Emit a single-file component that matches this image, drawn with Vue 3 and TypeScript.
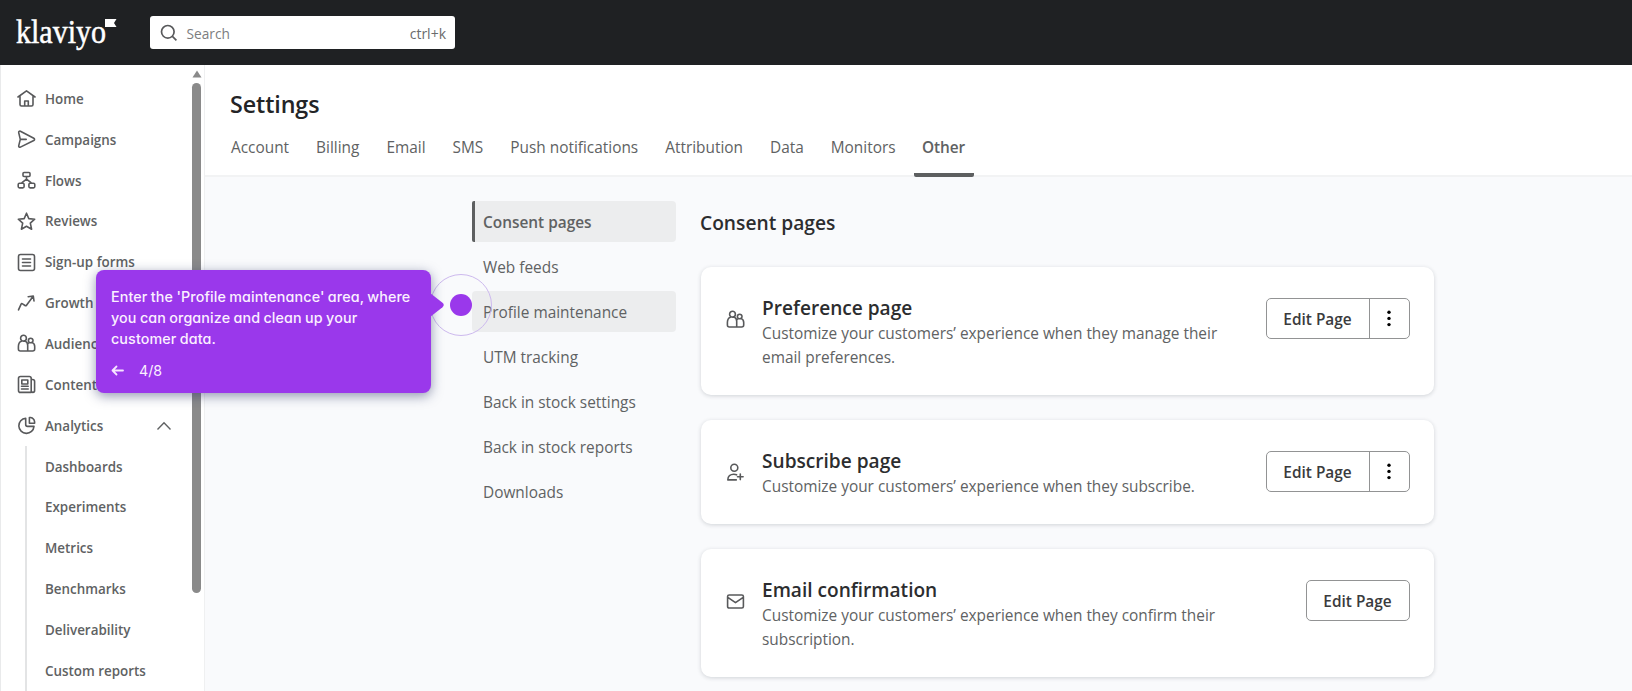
<script setup lang="ts">
interface NavItem {
  label: string
  icon: string
}

interface PageCard {
  title: string
  description: string
  icon: string
  menu: boolean
}

const icons: Record<string, string> = {
  home: 'M1 8 9.5 1.8 18 8M3 7v8.5c0 1 .6 1.5 1.5 1.5h10c1 0 1.500-.5 1.500-1.500V7M7.700 17v-5h3.600v5',
  send: 'M1.700 2.600c-.2-1 .8-1.700 1.700-1.300l13.400 7c1 .5 1 1.700 0 2.200l-13.400 6.600c-.9.4-1.900-.3-1.700-1.200L3.300 9.400zM3.300 9.400h5.900',
  flows: 'M7 1.500h5q1 0 1 1v2q0 1-1 1H7q-1 0-1-1v-2q0-1 1-1zM2.500 12.300h3.300q1.300 0 1.300 1.300v2q0 1.300-1.300 1.300H2.500q-1.300 0-1.300-1.300v-2q0-1.300 1.300-1.300zM13.200 12.300h3.300q1.300 0 1.300 1.300v2q0 1.300-1.300 1.300h-3.300q-1.300 0-1.300-1.300v-2q0-1.300 1.300-1.300zM9.500 5.500v2.600L5 11.700M9.500 8.100l4.500 3.600',
  star: 'M9.500 1.200 11.800 6.600 17.700 7.200 13.300 11.200 14.600 17.200 9.500 14.200 4.400 17.200 5.700 11.200 1.300 7.200 7.200 6.600z',
  form: 'M3.500 1.500h12q2 0 2 2v12q0 2-2 2h-12q-2 0-2-2v-12q0-2 2-2zM5.500 6h8M5.500 9.500h8M5.500 13h8',
  growth: 'M1.500 15.800 4 10.300Q4.600 9 5.600 9.800L8 11.500Q9 12.200 9.700 11L16 2.500M11.200 2.700 16.300 2 17 7',
  people: 'M6.500 1.300a2.900 2.900 0 1 1 0 5.800a2.900 2.900 0 1 1 0-5.800zM13.700 4.200a2.300 2.300 0 1 1 0 4.600a2.300 2.300 0 1 1 0-4.600zM4.400 7.200C2.200 8 1.400 9.900 1.400 12.500V15q0 2 2 2h12.200q2.100 0 2.100-2v-2.500c0-2-.8-3.200-2.300-3.900M8.600 7.200c1.400.8 2 2.200 2.100 4V17M12.200 8.600c-.8.400-1.300 1-1.600 1.800',
  content: 'M3.500 1.500h8.800q1.900 0 1.900 1.900v14H3.500q-2 0-2-2V3.500q0-2 2-2zM14.200 4.500h1.300q2.100 0 2.100 2v9q0 1.900-1.700 1.900t-1.700-1.900M4.800 5h6v4h-6zM4.500 11.300h6.700M4.500 14h6.700',
  pie: 'M8.700 2.200a7.600 7.600 0 1 0 8.300 8.200H10.500Q8.700 10.400 8.700 8.600zM12.400 1.500h1.200c2.500.5 3.700 2 4 4.300v1.400h-5.200z',
  personAdd: 'M8.300 1.300a3.500 3.500 0 1 1 0 7a3.500 3.500 0 1 1 0-7zM10.300 16.900H1.800c0-3.600 2.600-5.700 6-5.700 1.100 0 2 .2 2.800.6M14.300 11v5.600M11.500 13.800h5.600',
  mail: 'M3.200 3h12.600q1.600 0 1.600 1.600v9.800q0 1.600-1.600 1.600H3.200q-1.600 0-1.600-1.600V4.600Q1.600 3 3.200 3zM1.800 5.400 9.500 10.700 17.200 5.400',
}

const navItems: NavItem[] = [
  { label: 'Home', icon: 'home' },
  { label: 'Campaigns', icon: 'send' },
  { label: 'Flows', icon: 'flows' },
  { label: 'Reviews', icon: 'star' },
  { label: 'Sign-up forms', icon: 'form' },
  { label: 'Growth', icon: 'growth' },
  { label: 'Audience', icon: 'people' },
  { label: 'Content', icon: 'content' },
  { label: 'Analytics', icon: 'pie' },
]

const analyticsItems: string[] = [
  'Dashboards',
  'Experiments',
  'Metrics',
  'Benchmarks',
  'Deliverability',
  'Custom reports',
]

const tabs: string[] = [
  'Account',
  'Billing',
  'Email',
  'SMS',
  'Push notifications',
  'Attribution',
  'Data',
  'Monitors',
  'Other',
]

const sections: string[] = [
  'Consent pages',
  'Web feeds',
  'Profile maintenance',
  'UTM tracking',
  'Back in stock settings',
  'Back in stock reports',
  'Downloads',
]

const cards: PageCard[] = [
  {
    title: 'Preference page',
    description: 'Customize your customers’ experience when they manage their email preferences.',
    icon: 'people',
    menu: true,
  },
  {
    title: 'Subscribe page',
    description: 'Customize your customers’ experience when they subscribe.',
    icon: 'personAdd',
    menu: true,
  },
  {
    title: 'Email confirmation',
    description: 'Customize your customers’ experience when they confirm their subscription.',
    icon: 'mail',
    menu: false,
  },
]
</script>

<template>
  <div class="app">
    <header class="topbar">
      <svg class="logo" width="102" height="42" viewBox="0 0 102 42">
        <text x="0" y="27" textLength="90" lengthAdjust="spacingAndGlyphs">klaviyo</text>
        <path d="M89 3h11.500l-2.500 4 2.500 4H89z" />
      </svg>
      <div class="search">
        <svg class="search-icon" width="18" height="18" viewBox="0 0 18 18">
          <circle cx="7.800" cy="7.800" r="6.300" />
          <path d="m12.400 12.400 4 4" />
        </svg>
        <span class="placeholder">Search</span>
        <span class="shortcut">ctrl+k</span>
      </div>
    </header>

    <div class="body">
      <aside class="sidebar">
        <nav class="nav">
          <a v-for="item in navItems" :key="item.label" class="nav-item">
            <svg class="icon" width="19" height="19" viewBox="0 0 19 19"><path :d="icons[item.icon]" /></svg>
            <span>{{ item.label }}</span>
            <svg v-if="item.label === 'Analytics'" class="chevron" width="16" height="10" viewBox="0 0 16 10">
              <path d="M1.500 8.500 8 1.800l6.500 6.700" />
            </svg>
          </a>
          <div class="subnav">
            <a v-for="label in analyticsItems" :key="label" class="nav-item">{{ label }}</a>
          </div>
        </nav>
        <div class="scrollbar">
          <svg width="10" height="8" viewBox="0 0 10 8"><path d="M5 .5 9.500 7.500H.5z" /></svg>
          <div class="thumb"></div>
        </div>
      </aside>

      <main class="main">
        <div class="page-head">
          <h1>Settings</h1>
          <div class="tabs">
            <a v-for="tab in tabs" :key="tab" class="tab" :class="{ active: tab === 'Other' }">{{ tab }}</a>
          </div>
        </div>
        <div class="columns">
          <nav class="sections">
            <a
              v-for="(section, i) in sections"
              :key="section"
              class="section"
              :class="{ selected: i === 0, hovered: i === 2 }"
            >{{ section }}</a>
          </nav>
          <section class="pages">
            <h2>Consent pages</h2>
            <article v-for="card in cards" :key="card.title" class="card">
              <svg class="icon card-icon" width="19" height="19" viewBox="0 0 19 19"><path :d="icons[card.icon]" /></svg>
              <div class="card-text">
                <h3>{{ card.title }}</h3>
                <p>{{ card.description }}</p>
              </div>
              <div class="button-group">
                <button type="button" class="edit">Edit Page</button>
                <button v-if="card.menu" type="button" class="more">
                  <svg width="4" height="17" viewBox="0 0 4 17">
                    <circle cx="2" cy="2.200" r="1.700" />
                    <circle cx="2" cy="8.400" r="1.700" />
                    <circle cx="2" cy="14.600" r="1.700" />
                  </svg>
                </button>
              </div>
            </article>
          </section>
        </div>
      </main>
    </div>

    <div class="hotspot"><span class="dot"></span></div>
    <div class="tour">
      <p>Enter the 'Profile maintenance' area, where<br />you can organize and clean up your<br />customer data.</p>
      <div class="tour-foot">
        <svg width="13" height="11" viewBox="0 0 13 11"><path d="M12 5.500H1.500M5.500 1.500l-4 4 4 4" /></svg>
        <span>4/8</span>
      </div>
      <svg class="tour-arrow" width="15" height="24" viewBox="0 0 15 24"><path d="M0 0 12.500 9.800q2.500 2.200 0 4.400L0 24z" /></svg>
    </div>
  </div>
</template>

<style>
body {
  overflow: hidden;
}
</style>

<style scoped>
.app {
  position: relative;
  width: 1632px;
  height: 691px;
  overflow: hidden;
  display: flex;
  flex-direction: column;
  background: #f9fafc;
  color: #606263;
  font-family: 'Open Sans', 'Noto Sans', sans-serif;
}

.topbar {
  flex: none;
  height: 65px;
  display: flex;
  align-items: flex-start;
  background: #1f2123;
  box-sizing: border-box;
  padding: 16px 0 0 16px;
}

.logo {
  fill: #fff;
  overflow: visible;
}

.logo text {
  font-family: 'Liberation Serif', serif;
  font-size: 34px;
  stroke: #fff;
  stroke-width: 0.5px;
}

.search {
  margin-left: 31.5px;
  width: 305.5px;
  height: 33px;
  box-sizing: border-box;
  padding: 0 9px 0 10px;
  background: #fff;
  border-radius: 3px;
  display: flex;
  align-items: center;
  font-size: 13.7px;
}

.search-icon {
  fill: none;
  stroke: #58595b;
  stroke-width: 1.7;
}

.placeholder {
  flex: 1;
  margin: 2px 0 0 9px;
  color: #7c7d7e;
}

.shortcut {
  margin-top: 1px;
  font-size: 14px;
  color: #6a6b6c;
}

.body {
  flex: 1;
  min-height: 0;
  display: flex;
}

.sidebar {
  flex: none;
  width: 205px;
  box-sizing: border-box;
  border-left: 1px solid #e9eaeb;
  border-right: 1px solid #eff0f1;
  background: #fff;
  display: flex;
  overflow: hidden;
}

.nav {
  width: 190px;
  padding-top: 13.500px;
}

.nav-item {
  height: 40.85px;
  display: flex;
  align-items: center;
  padding-left: 16px;
  font-size: 13.4px;
  font-weight: 600;
  white-space: nowrap;
}

.nav-item > span {
  margin-left: 9px;
}

.icon {
  flex: none;
  fill: none;
  stroke: #58595b;
  stroke-width: 1.6;
  stroke-linejoin: round;
  stroke-linecap: round;
}

.chevron {
  margin-left: auto;
  margin-right: 19px;
  fill: none;
  stroke: #606263;
  stroke-width: 1.4;
}

.subnav {
  margin-left: 24px;
  border-left: 2px solid #e3e4e5;
}

.subnav .nav-item {
  padding-left: 18px;
}

.scrollbar {
  padding: 5px 0 0 1px;
  display: flex;
  flex-direction: column;
  gap: 5px;
}

.scrollbar svg {
  display: block;
  fill: #8a8a8a;
}

.thumb {
  width: 9px;
  height: 510px;
  border-radius: 5px;
  background: #8a8a8a;
}

.main {
  flex: 1;
  margin-left: 2px;
  display: flex;
  flex-direction: column;
}

.page-head {
  height: 112px;
  box-sizing: border-box;
  background: #fff;
  border-bottom: 2px solid #f2f3f4;
  margin-left: -2px;
  padding: 22px 0 0 25px;
}

h1 {
  margin: 0;
  font-size: 23.3px;
  line-height: 34px;
  font-weight: 600;
  letter-spacing: -0.1px;
  color: #232426;
}

.tabs {
  display: flex;
  gap: 9px;
  margin-left: -8px;
  height: 56px;
}

.tab {
  padding: 16px 9px 0;
  font-size: 15.4px;
  line-height: 22px;
  white-space: nowrap;
}

.tab.active {
  padding: 16px 8.500px 0;
  font-weight: 600;
  border-bottom: 4px solid #5d5f60;
  border-radius: 2px;
  letter-spacing: -0.1px;
}

.columns {
  display: flex;
  align-items: flex-start;
  padding: 24px 0 0 265px;
}

.sections {
  width: 204px;
  display: flex;
  flex-direction: column;
  gap: 4px;
}

.section {
  box-sizing: border-box;
  height: 41px;
  line-height: 43px;
  padding-left: 11px;
  border-radius: 4px;
  font-size: 15.4px;
}

.section.selected {
  padding-left: 8px;
  border-left: 3px solid #5d5f60;
  border-radius: 2px 4px 4px 2px;
  background: #ecedee;
  font-weight: 600;
}

.section.hovered {
  background: #ecedee;
}

.pages {
  width: 733px;
  margin-left: 25px;
  display: flex;
  flex-direction: column;
}

h2 {
  margin: 10px 0 33px -1px;
  font-size: 19.2px;
  line-height: 23px;
  font-weight: 600;
  color: #2c2d2f;
}

.card {
  box-sizing: border-box;
  display: flex;
  align-items: flex-start;
  padding: 28px 24px 24.500px;
  margin-bottom: 25.500px;
  background: #fff;
  border-radius: 10px;
  box-shadow: 0 1px 4px rgba(30, 40, 50, 0.18);
}

.card-icon {
  margin: 15px 0 0 1px;
}

.card-text {
  width: 470px;
  margin-left: 17px;
}

h3 {
  margin: 0;
  font-size: 19.1px;
  line-height: 27px;
  font-weight: 600;
  color: #2c2d2f;
}

p {
  margin: 0;
  font-size: 15.4px;
  line-height: 24px;
}

.button-group {
  margin: 3px 0 0 auto;
  height: 41px;
  box-sizing: border-box;
  border: 1px solid #929394;
  border-radius: 5px;
  display: flex;
}

button {
  margin: 0;
  padding: 0;
  border: 0;
  background: none;
  color: #3a3b3d;
  font: 600 15.4px 'Open Sans', 'Noto Sans', sans-serif;
}

.edit {
  width: 102px;
  padding: 2px 1px 0 0;
}

.more {
  width: 40px;
  padding-right: 2px;
  border-left: 1px solid #929394;
  display: flex;
  align-items: center;
  justify-content: center;
}

.tour {
  position: absolute;
  left: 96px;
  top: 270px;
  width: 335px;
  height: 123px;
  box-sizing: border-box;
  padding: 16px 15px;
  border-radius: 8px;
  background: #9a38eb;
  color: #fbf0ff;
  box-shadow: 0 3px 12px rgba(40, 50, 100, 0.5);
  font-family: Inter, 'Open Sans', sans-serif;
  font-feature-settings: 'cv11';
}

.tour p {
  font-size: 14.3px;
  line-height: 21px;
  font-weight: 500;
  letter-spacing: 0.12px;
  word-spacing: -0.6px;
  white-space: nowrap;
}

.tour-foot {
  display: flex;
  align-items: center;
  margin-top: 11px;
  font-size: 14.2px;
  line-height: 21px;
}

.tour-foot svg {
  margin-right: 15px;
  fill: none;
  stroke: #f6e4ff;
  stroke-width: 1.8;
  stroke-linecap: round;
  stroke-linejoin: round;
}

.tour-arrow {
  position: absolute;
  left: 334px;
  top: 23px;
  fill: #9a38eb;
}

.hotspot {
  position: absolute;
  left: 430px;
  top: 274px;
  width: 62px;
  height: 62px;
  box-sizing: border-box;
  border: 1px solid #cdb9ee;
  border-radius: 50%;
  display: flex;
  align-items: center;
  justify-content: center;
}

.dot {
  width: 22px;
  height: 22px;
  border-radius: 50%;
  background: #9a38eb;
}
</style>
